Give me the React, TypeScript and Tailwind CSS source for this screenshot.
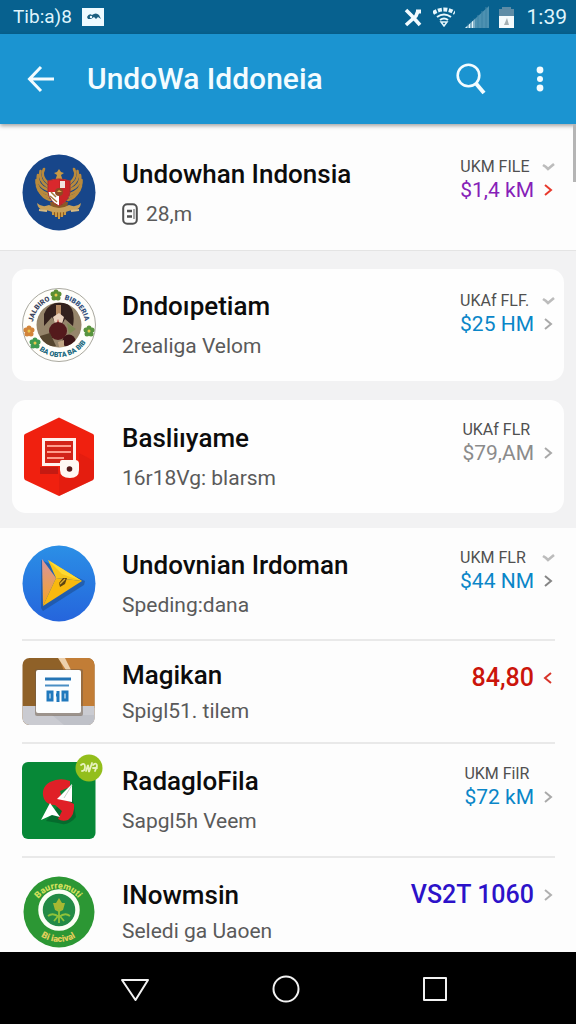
import type { ReactNode } from "react";

function Garuda() {
  return (
    <svg viewBox="0 0 74 77" className="h-[77px] w-[74px]" aria-hidden="true">
      <ellipse cx="37" cy="38.5" rx="36.5" ry="38" fill="#17468a" />
      <g fill="none" stroke="#b98a3c" strokeWidth="2.6" strokeLinecap="round">
        <path d="M22 15 Q18 22 26 29" />
        <path d="M18.500 17 Q16 26 26 33" />
        <path d="M16 21 Q14 31 26 36" />
        <path d="M14.500 26 Q14 36 26 40" />
        <path d="M15 32 Q17 41 27 43" />
        <path d="M18 38 Q21 44 28 46" />
        <path d="M52 15 Q56 22 48 29" />
        <path d="M55.500 17 Q58 26 48 33" />
        <path d="M58 21 Q60 31 48 36" />
        <path d="M59.500 26 Q60 36 48 40" />
        <path d="M59 32 Q57 41 47 43" />
        <path d="M56 38 Q53 44 46 46" />
      </g>
      <path d="M37 15 L39 18 L42 19 L39 21 L41 27 H33 L35 21 L32 19 L35 18 Z" fill="#c99a45" />
      <path d="M28 48 H46 L44 60 L37 64 L30 60 Z" fill="#8a5a26" />
      <path d="M31 57 V61 M34 58 V63 M37 58 V65 M40 58 V63 M43 57 V61" stroke="#c99a45" strokeWidth="2" />
      <path d="M15 49 Q20 54 27 51 Q37 57 47 51 Q54 54 59 49 Q58 57 50 56 Q37 61 24 56 Q16 57 15 49 Z" fill="#c9a15a" />
      <path d="M17 56 L25 57 M49 57 L57 56" stroke="#d8bb82" strokeWidth="2" />
      <path d="M26 27 Q37 23 48 27 V38 Q47 47 37 52 Q27 47 26 38 Z" fill="#fff" />
      <path d="M26 27 Q31 25 37 25 V38 H26 Z" fill="#d9282d" />
      <path d="M37 25 Q43 25 48 27 V38 Q47 47 37 52 Z" fill="#c92428" />
      <path d="M38 27 H43 V34 H38 Z" fill="#f1e4df" />
      <path d="M28 42 L35 48 M29 38 L34 43" stroke="#a37a3d" strokeWidth="1.500" />
      <circle cx="37" cy="38" r="4" fill="#8f4a22" />
      <path d="M35 38 H40 L37 36 Z" fill="#e6b34f" />
      <path d="M26 27 Q37 23 48 27 V38 Q47 47 37 52 Q27 47 26 38 Z" fill="none" stroke="#a52a2a" />
    </svg>
  );
}

function Flower({ x, y, fill }: { x: number; y: number; fill: string }) {
  return (
    <g fill={fill}>
      <circle cx={x} cy={y - 3} r="2.500" />
      <circle cx={x + 3} cy={y - 1} r="2.500" />
      <circle cx={x + 2} cy={y + 3} r="2.500" />
      <circle cx={x - 2} cy={y + 3} r="2.500" />
      <circle cx={x - 3} cy={y - 1} r="2.500" />
      <circle cx={x} cy={y} r="1.500" fill="#e9c84a" />
    </g>
  );
}

function Seal() {
  return (
    <svg viewBox="0 0 74 74" className="h-[74px] w-[74px]" aria-hidden="true">
      <defs>
        <path id="seal-top" d="M11 37 A26 26 0 0 1 63 37" />
        <path id="seal-bottom" d="M5 37 A32 32 0 0 0 69 37" />
        <clipPath id="seal-clip">
          <circle cx="37" cy="37" r="22.500" />
        </clipPath>
      </defs>
      <circle cx="37" cy="37" r="36.500" fill="#fffefa" stroke="#a9a89f" />
      <g clipPath="url(#seal-clip)">
        <rect x="14" y="14" width="46" height="46" fill="#96856b" />
        <path d="M22 26 Q27 12 44 15 Q54 20 51 38 L43 31 L37 42 L30 29 L22 38 Z" fill="#33211d" />
        <rect x="34" y="17" width="5" height="12" fill="#b58a63" />
        <path d="M31 29 L37 25 L42 29 L40 36 H33 Z" fill="#ead2bd" />
        <path d="M36 31 L38 38 L34 38 Z" fill="#b33a33" />
        <circle cx="36" cy="43" r="9" fill="#541a1c" />
        <circle cx="47" cy="53" r="6.500" fill="#3d1517" />
        <path d="M45 35 L54 41 L47 46 Z" fill="#7f8a55" />
        <path d="M18 48 L28 45 L34 58 L20 60 Z" fill="#55452e" />
        <path d="M36 54 L42 52 L42 59 L37 59 Z" fill="#c2a684" />
      </g>
      <g fontFamily="Roboto, sans-serif" fontWeight="900" fontSize="7">
        <text fill="#3c4560">
          <textPath href="#seal-top" startOffset="3">JALBIRO</textPath>
        </text>
        <text fill="#34517d">
          <textPath href="#seal-top" startOffset="46">BIBBERIA</textPath>
        </text>
        <text fill="#20697f">
          <textPath href="#seal-bottom" startOffset="29">BA OBTA BA BIB</textPath>
        </text>
      </g>
      <Flower x={34} y={7} fill="#5c8f34" />
      <Flower x={7} y={43} fill="#d2843a" />
      <Flower x={67} y={43} fill="#58943e" />
      <Flower x={13} y={55} fill="#3f9a50" />
    </svg>
  );
}

function Hexagon() {
  return (
    <svg viewBox="0 0 74 79" className="h-[79px] w-[74px]" aria-hidden="true">
      <path d="M37 0.500 L71 17 Q72 17.500 72 19 V60 Q72 62 71 63 L37 79 L3 63 Q2 62 2 60 V19 Q2 17.500 3 17 Z" fill="#f0200f" />
      <path d="M37 57 V79 L71 63 Q72 62 72 60 V44 L57 36 V50 Z" fill="#d81a10" opacity="0.500" />
      <path d="M18 50 H36 V57 H18 Z" fill="#c51a12" />
      <rect x="21.500" y="22.500" width="31" height="25" fill="#d22419" stroke="#fff1ec" strokeWidth="3" />
      <path d="M25 29 H49 M25 35 H49 M25 41 H42" stroke="#ff9c8c" strokeWidth="2" />
      <path d="M38 45 Q38 43 40 43 H53 Q57 43 57 47 V53 Q57 61 48 61 Q38 61 38 53 Z" fill="#fff8f3" />
      <circle cx="47.500" cy="52" r="2.800" fill="#541a1a" />
    </svg>
  );
}

function PlayDisc() {
  return (
    <svg viewBox="0 0 74 77" className="h-[77px] w-[74px]" aria-hidden="true">
      <defs>
        <linearGradient id="disc" x1="0" y1="0" x2="0" y2="1">
          <stop offset="0" stopColor="#2b8fe6" />
          <stop offset="1" stopColor="#2565dc" />
        </linearGradient>
        <linearGradient id="wing" x1="0" y1="0" x2="0" y2="1">
          <stop offset="0" stopColor="#d894a0" />
          <stop offset="1" stopColor="#f6a51f" />
        </linearGradient>
      </defs>
      <ellipse cx="37" cy="38.500" rx="36.500" ry="38" fill="url(#disc)" />
      <path d="M19 15 L26 18 L63 36 L62 40 L21 66 L19 63 Z" fill="#1d4d8f" opacity="0.600" />
      <path d="M20 14 L34 33 L21 61 Z" fill="url(#wing)" />
      <path d="M26 15 L60 36 L34 33 Z" fill="#f6c51c" />
      <path d="M60 36 L34 33 L21 61 Z" fill="#f9b90e" />
      <path d="M26 15 L60 36 L40 29 Z" fill="#ffd930" />
      <path d="M37 38 L41 33 L45 33 L43 39 L38 42 Z" fill="#5c4311" />
      <path d="M38 39 L43 34" stroke="#e0b030" strokeWidth="1.500" />
    </svg>
  );
}

function Calendar() {
  return (
    <svg viewBox="0 0 74 67" className="h-[67px] w-[74px]" aria-hidden="true">
      <defs>
        <clipPath id="cal-clip">
          <rect x="0.500" y="0" width="72" height="67" rx="7" />
        </clipPath>
      </defs>
      <g clipPath="url(#cal-clip)">
        <rect width="74" height="67" fill="#8f6128" />
        <path d="M37 0 H74 V50 H56 Z" fill="#c27d36" />
        <path d="M36 0 H43 L49 12 H44 Z" fill="#ecd0ac" />
        <rect y="48" width="74" height="19" fill="#cacbd1" />
        <path d="M30 57 L42 67 H74 V57 Z" fill="#bfc1c8" />
      </g>
      <rect x="13" y="11" width="48" height="47" rx="2" fill="#6e5c48" opacity="0.500" />
      <rect x="14" y="12" width="45" height="43" rx="2" fill="#fdfefe" />
      <path d="M23 21 H49" stroke="#2475b5" strokeWidth="3" />
      <path d="M23 27.500 H47" stroke="#4a8fc4" strokeWidth="2" />
      <g fill="none" stroke="#2079bd" strokeWidth="3">
        <path d="M26 34 H30 V42 H26 Z" />
        <path d="M36 33 V44 M34 37 H36" />
        <path d="M41 34 H45 V42 H41 Z" />
      </g>
    </svg>
  );
}

function Ribbon() {
  return (
    <span className="relative block">
      <svg viewBox="0 0 74 78" className="h-[78px] w-[74px]" aria-hidden="true">
        <rect x="0" y="1" width="73.500" height="77" rx="6" fill="#078837" />
        <path d="M24 60 L49 28 L54 56 Q46 66 36 62 Z" fill="#046029" opacity="0.700" />
        <path d="M48 20 Q38 16 28 21 Q18 27 22 38 Q25 44 33 44 L40 50 L36 58 Q40 61 46 59 Q53 54 52 43 L40 37 L38 30 L48 26 Z" fill="#e02027" />
        <path d="M50 23 V41 L35 38 Z" fill="#fff" />
        <path d="M28 42 L38 56 L30 54 L19 59 Z" fill="#fff" />
        <path d="M50 24 L42 37" stroke="#c8d5cc" />
      </svg>
      <svg viewBox="0 0 28 28" className="absolute -top-[7px] left-[53px] size-7" aria-hidden="true">
        <circle cx="14" cy="14" r="13.500" fill="#93be1c" />
        <g fill="none" stroke="#e7f2bd" strokeWidth="1.800" strokeLinecap="round">
          <path d="M6 11 Q10 8 10 13 Q10 17 7 17" />
          <path d="M11 17 L13 11 L14 18 L17 9" />
          <path d="M18 11 Q22 8 22 12 L20 17 M18 14 H22" />
        </g>
      </svg>
    </span>
  );
}

function GreenSeal() {
  return (
    <svg viewBox="0 0 74 74" className="h-[74px] w-[74px]" aria-hidden="true">
      <defs>
        <path id="green-top" d="M12 38 A24.500 24.500 0 0 1 61 38" />
        <path id="green-bottom" d="M5 35 A32 32 0 0 0 69 35" />
      </defs>
      <circle cx="37" cy="37" r="35.500" fill="#2c9734" />
      <circle cx="37" cy="35" r="18.500" fill="#238b45" stroke="#fbfff5" strokeWidth="4.500" />
      <g fontFamily="Roboto, sans-serif" fontWeight="900" fontSize="9" fill="#cfdf5b">
        <text>
          <textPath href="#green-top" startOffset="15">Baurremuti</textPath>
        </text>
        <text>
          <textPath href="#green-bottom" startOffset="31" fill="#e3cf5c">Bi iacival</textPath>
        </text>
      </g>
      <path d="M37 23 L40 28 L43 28 L41 35 L37 37 L33 35 L31 28 L34 28 Z" fill="#a8b832" />
      <path d="M37 34 V48 M37 42 Q31 37 26 41 M37 42 Q43 37 48 41 M37 40 L32 46 M37 40 L42 46" stroke="#8fc23a" strokeWidth="1.800" fill="none" />
    </svg>
  );
}

function Chevron({ dir, className }: { dir: "down" | "right" | "left"; className: string }) {
  const paths = {
    down: "M1 5 L4 7 L6 9 L12 4",
    right: "M3 2 L9 7 L3 12",
    left: "M9 2 L3 7 L9 12",
  };
  return (
    <svg viewBox="0 0 13 14" className={`h-3.5 w-[13px] ${className}`} fill="none" stroke="currentColor" strokeWidth={dir === "down" ? 2.6 : 2} aria-hidden="true">
      <path d={paths[dir]} />
    </svg>
  );
}

function Row({
  icon,
  title,
  sub,
  compact,
  children,
}: {
  icon: ReactNode;
  title: string;
  sub: ReactNode;
  compact?: boolean;
  children: ReactNode;
}) {
  return (
    <a href="#details" className="flex items-center py-[17px]">
      <span className="block w-[74px] shrink-0">{icon}</span>
      <span className={`ml-[26px] flex min-w-0 flex-1 flex-col ${compact ? "gap-1.5" : "gap-2.5"}`}>
        <span className="text-[26px] leading-8 font-medium whitespace-nowrap text-[#0c0c0c]">{title}</span>
        <span className="flex items-center gap-2 text-[21px] leading-7 whitespace-nowrap text-[#5a5a5a]">{sub}</span>
      </span>
      {children}
    </a>
  );
}

function Price({
  label,
  amount,
  color,
  down = true,
  arrow = "text-[#a9a9a9]",
}: {
  label: string;
  amount: string;
  color: string;
  down?: boolean;
  arrow?: string;
}) {
  return (
    <span className="grid shrink-0 grid-cols-[auto_13px] items-center gap-x-2 self-start pt-0.5 whitespace-nowrap">
      <span className="text-[16px] leading-[22px] text-[#505050]">{label}</span>
      {down ? <Chevron dir="down" className="text-[#bcbcbc]" /> : <span />}
      <span className={`text-[21px] leading-6 ${color}`}>{amount}</span>
      <Chevron dir="right" className={arrow} />
    </span>
  );
}

function Total({ amount, color, dir, arrow }: { amount: string; color: string; dir: "left" | "right"; arrow: string }) {
  return (
    <span className="flex shrink-0 items-center gap-2 self-start pt-1 whitespace-nowrap">
      <span className={`text-[25px] leading-8 font-medium ${color}`}>{amount}</span>
      <Chevron dir={dir} className={arrow} />
    </span>
  );
}

export default function App() {
  return (
    <div className="flex h-screen flex-col overflow-hidden bg-[#fdfdfd] font-[Roboto,sans-serif]">
      <div className="flex h-[34px] shrink-0 items-center bg-[#07618f] pr-[9px] pl-[13px] text-[#dff4fc]">
        <span className="text-[19px] leading-6">Tib:a)8</span>
        <svg viewBox="0 0 22 18" className="ml-2.5 h-[18px] w-[22px]" aria-hidden="true">
          <rect width="22" height="18" fill="#eefaff" />
          <path d="M5 9 Q7 5 10 7 Q14 4 17 7 L19 11 L16 9 L14 11 L12 9 L9 11 H6 Z" fill="#1c5f80" />
          <circle cx="9" cy="9" r="1.200" fill="#eefaff" />
        </svg>
        <div className="ml-auto flex items-center">
          <svg viewBox="0 0 18 19" className="h-[19px] w-[18px]" fill="none" stroke="#f2fbff" strokeWidth="3.600" aria-hidden="true">
            <path d="M2 2 L8 8 L16 17 M14 3 L12 8 L2 17" />
            <path d="M12 3.500 L17 3.500" strokeWidth="4" />
          </svg>
          <svg viewBox="0 0 22 20" className="ml-[11px] h-5 w-[22px]" fill="none" stroke="#e6f7fd" strokeWidth="2" aria-hidden="true">
            <path d="M0 6 Q11 -1 22 6" strokeWidth="4" strokeDasharray="4 1.500" />
            <path d="M4 10 Q11 5 18 10" />
            <path d="M7 13 Q11 10 15 13" />
            <path d="M8 15 H14 L11 19 Z" strokeWidth="1.500" />
          </svg>
          <svg viewBox="0 0 24 22" className="ml-2.5 h-[22px] w-6" aria-hidden="true">
            <path d="M0 22 L24 0 V22 Z" fill="#4d91b1" />
            <path d="M0 22 L10 13 V22 Z" fill="#e2f4fa" />
            <path d="M3 17 V22 M6 14 V22 M9 12 V22" stroke="#1f6d94" strokeWidth="1" />
            <path d="M13 9 V22 M17 5 V22 M21 1 V22" stroke="#3c82a5" strokeWidth="1" />
          </svg>
          <svg viewBox="0 0 15 21" className="ml-2.5 h-[21px] w-[15px]" aria-hidden="true">
            <path d="M3 0 H12 V2 H15 V9 H0 V2 H3 Z" fill="#5d8ca6" />
            <rect y="9" width="15" height="12" fill="#f3fafc" />
            <path d="M5 18 L8 11 L10 18 Z" fill="#a3afb3" />
          </svg>
          <span className="ml-[13px] text-[21px] leading-6">1:39</span>
        </div>
      </div>

      <header className="relative z-10 flex h-[90px] shrink-0 items-center bg-[#1b94d1] pr-8 pl-[27px] text-[#f3fcff] shadow-[0_2px_4px_rgba(0,0,0,0.35)]">
        <button type="button" aria-label="Back" className="block">
          <svg viewBox="0 0 28 28" className="size-7" fill="none" stroke="currentColor" strokeWidth="3" aria-hidden="true">
            <path d="M27 14 H3 M14 2 L2.500 14 L14 26" />
          </svg>
        </button>
        <h1 className="ml-8 flex-1 text-[30px] leading-9 font-medium whitespace-nowrap">UndoWa Iddoneia</h1>
        <button type="button" aria-label="Search" className="block">
          <svg viewBox="0 0 30 32" className="h-8 w-[30px]" fill="none" stroke="currentColor" strokeWidth="2.600" aria-hidden="true">
            <circle cx="12.500" cy="12.500" r="10.800" />
            <path d="M20 20.500 L28 30" strokeWidth="4" />
          </svg>
        </button>
        <button type="button" aria-label="More options" className="ml-[50px] block">
          <svg viewBox="0 0 8 26" className="h-[26px] w-2" fill="currentColor" aria-hidden="true">
            <circle cx="4" cy="4" r="3.400" />
            <circle cx="4" cy="13" r="3" />
            <circle cx="4" cy="22" r="3.400" />
          </svg>
        </button>
        <span className="absolute top-full right-0 h-[58px] w-[3px] bg-[#b5b5b5]" />
      </header>

      <main className="min-h-0 flex-1 overflow-x-hidden overflow-y-auto [scrollbar-width:none]">
        <section className="border-b border-[#e4e4e4] pt-[13px] pr-[21px] pb-0.5 pl-[22px]">
          <Row
            icon={<Garuda />}
            title="Undowhan Indonsia"
            sub={
              <>
                <svg viewBox="0 0 16 22" className="h-[22px] w-4" fill="none" stroke="#505050" aria-hidden="true">
                  <rect x="1.200" y="1.200" width="13.600" height="19.600" rx="4" strokeWidth="2" />
                  <path d="M5 8 H10 M5 13.500 H10" strokeWidth="2.500" />
                  <path d="M12 6 V16" strokeWidth="1" />
                </svg>
                28,m
              </>
            }
          >
            <Price label="UKM FILE" amount="$1,4 kM" color="text-[#8620b8]" arrow="text-[#e8392c]" />
          </Row>
        </section>

        <div className="flex flex-col gap-[19px] bg-[#f2f2f3] px-3 pt-[18px] pb-[15px]">
          <section className="rounded-[14px] bg-[#fefefe] py-0.5 pr-[9px] pl-2.5">
            <Row icon={<Seal />} title="Dndoıpetiam" sub="2realiga Velom">
              <Price label="UKAf FLF." amount="$25 HM" color="text-[#0a86c8]" />
            </Row>
          </section>
          <section className="rounded-[14px] bg-[#fefefe] pr-[9px] pl-2.5">
            <Row icon={<Hexagon />} title="Basliıyame" sub="16r18Vg: blarsm">
              <Price label="UKAf FLR" amount="$79,AM" color="text-[#8b8b8b]" down={false} />
            </Row>
          </section>
        </div>

        <div className="flex flex-col divide-y-2 divide-[#e9e9e9] pr-[21px] pl-[22px]">
          <Row icon={<PlayDisc />} title="Undovnian Irdoman" sub="Speding:dana">
            <Price label="UKM FLR" amount="$44 NM" color="text-[#0a86c8]" arrow="text-[#858585]" />
          </Row>
          <Row icon={<Calendar />} title="Magikan" sub="Spigl51. tilem" compact>
            <Total amount="84,80" color="text-[#cb150b]" dir="left" arrow="text-[#d8342a]" />
          </Row>
          <Row icon={<Ribbon />} title="RadagloFila" sub="Sapgl5h Veem">
            <Price label="UKM FilR" amount="$72 kM" color="text-[#0a86c8]" down={false} />
          </Row>
          <Row icon={<GreenSeal />} title="INowmsin" sub="Seledi ga Uaoen" compact>
            <Total amount="VS2T 1060" color="text-[#2c12c9]" dir="right" arrow="text-[#b0b0b0]" />
          </Row>
        </div>
      </main>

      <nav className="flex h-[72px] shrink-0 items-center justify-center gap-[122px] bg-black pt-0.5 pr-2 text-[#f2f2f2]">
        <button type="button" aria-label="Back" className="block">
          <svg viewBox="0 0 30 28" className="h-7 w-[30px]" fill="none" stroke="currentColor" strokeWidth="2" strokeLinejoin="round" aria-hidden="true">
            <path d="M2 5 H28 L15.500 25 Z" />
          </svg>
        </button>
        <button type="button" aria-label="Home" className="block">
          <svg viewBox="0 0 28 28" className="size-7" fill="none" stroke="currentColor" strokeWidth="2" aria-hidden="true">
            <circle cx="14" cy="14" r="12.500" />
          </svg>
        </button>
        <button type="button" aria-label="Recent apps" className="block">
          <svg viewBox="0 0 26 26" className="size-[26px]" fill="none" stroke="currentColor" strokeWidth="2" strokeLinejoin="round" aria-hidden="true">
            <rect x="2" y="2" width="22" height="22" />
          </svg>
        </button>
      </nav>
    </div>
  );
}
